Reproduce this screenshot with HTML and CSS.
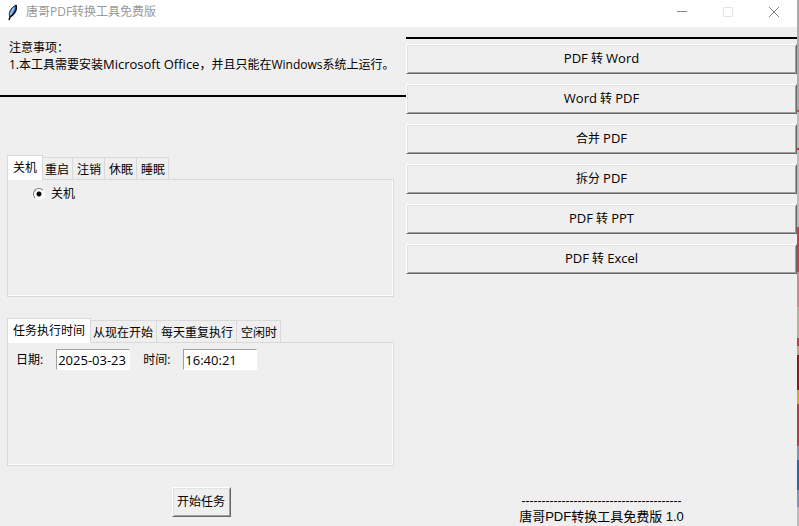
FILE: index.html
```html
<!DOCTYPE html>
<html lang="zh-CN">
<head>
<meta charset="utf-8">
<title>唐哥PDF转换工具免费版</title>
<link rel="stylesheet" href="styles.css">
</head>
<body>
<div class="window">
  <header class="titlebar">
    <svg class="feather" width="16" height="18" viewBox="0 0 16 18" aria-hidden="true">
      <path d="M5 14C3 11 5 5 11 2c1.500 4-1 9-6 12z" fill="#3f7fd0" stroke="#333" stroke-width="1"/>
      <path d="M9 5C7.500 7 6.500 9 5.500 12" fill="none" stroke="#9cc8f4" stroke-width="1.600"/>
      <path d="M11 2c1.500 4-1 9-6 12l-1 3" fill="none" stroke="#111" stroke-width="1.500"/>
    </svg>
    <h1 class="title">唐哥PDF转换工具免费版</h1>
    <div class="controls">
      <button class="control" type="button" aria-label="最小化"><svg width="10" height="10" viewBox="0 0 10 10"><path d="M0 4.5h10" stroke="#888"/></svg></button>
      <button class="control" type="button" aria-label="最大化" disabled><svg width="10" height="10" viewBox="0 0 10 10"><path d="M.5.5h9v9h-9z" fill="none" stroke="#e5e5e5"/></svg></button>
      <button class="control" type="button" aria-label="关闭"><svg width="10" height="10" viewBox="0 0 10 10"><path d="M0 0l10 10M10 0L0 10" stroke="#888"/></svg></button>
    </div>
  </header>
  <main class="content">
    <section class="left">
      <div class="notice">
        <p>注意事项：</p>
        <p>1.本工具需要安装<span class="latin">Microsoft Office</span>，并且只能在Windows系统上运行。</p>
      </div>
      <div class="notebook action-book">
        <div class="tabs" role="tablist">
          <button class="tab active" type="button" role="tab" aria-selected="true">关机</button>
          <button class="tab" type="button" role="tab">重启</button>
          <button class="tab" type="button" role="tab">注销</button>
          <button class="tab" type="button" role="tab">休眠</button>
          <button class="tab" type="button" role="tab">睡眠</button>
        </div>
        <div class="pane action-pane" role="tabpanel">
          <label class="choice"><input class="radio" type="radio" name="action" checked>关机</label>
        </div>
      </div>
      <div class="notebook">
        <div class="tabs" role="tablist">
          <button class="tab active" type="button" role="tab" aria-selected="true">任务执行时间</button>
          <button class="tab" type="button" role="tab">从现在开始</button>
          <button class="tab" type="button" role="tab">每天重复执行</button>
          <button class="tab" type="button" role="tab">空闲时</button>
        </div>
        <div class="pane time-pane" role="tabpanel">
          <label class="field">日期: <input class="entry" type="text" value="2025-03-23"></label>
          <label class="field">时间: <input class="entry" type="text" value="16:40:21"></label>
        </div>
      </div>
      <button class="raised start" type="button">开始任务</button>
    </section>
    <section class="right">
      <div class="tools">
        <button class="raised" type="button"><span class="latin">PDF</span> 转 <span class="latin">Word</span></button>
        <button class="raised" type="button"><span class="latin">Word</span> 转 <span class="latin">PDF</span></button>
        <button class="raised" type="button">合并 <span class="latin">PDF</span></button>
        <button class="raised" type="button">拆分 <span class="latin">PDF</span></button>
        <button class="raised" type="button"><span class="latin">PDF</span> 转 <span class="latin">PPT</span></button>
        <button class="raised" type="button"><span class="latin">PDF</span> 转 <span class="latin">Excel</span></button>
      </div>
      <footer class="version">
        <p class="dashes">----------------------------------------</p>
        <p>唐哥PDF转换工具免费版 1.0</p>
      </footer>
    </section>
  </main>
</div>
<div class="backdrop"></div>
</body>
</html>
```
FILE: styles.css
```css
* { box-sizing: border-box; }

body {
  margin: 0;
  display: flex;
  min-height: 100vh;
  background: #efefef;
  color: #000;
  font: 12px/17px "Open Sans", "Noto Sans CJK SC", sans-serif;
}

p, h1 { margin: 0; }
button, input { font: inherit; color: inherit; border-radius: 0; }
.latin { font-size: 13px; }

.window { flex: 1; display: flex; flex-direction: column; min-width: 0; }

.titlebar {
  display: flex;
  align-items: center;
  height: 27px;
  padding: 0 0 4px 5px;
  background: #fff;
}
.title { margin-left: 5px; font-size: 12px; font-weight: 400; color: #999; }
.controls { display: flex; margin-left: auto; }
.control {
  display: flex;
  align-items: center;
  justify-content: center;
  width: 46px;
  height: 22px;
  padding: 0;
  border: 0;
  background: none;
}

.content { flex: 1; display: grid; grid-template-columns: 406fr 391fr; }

.left { display: flex; flex-direction: column; }
.notice {
  padding: 12px 0 22px 9px;
  border-bottom: 2px solid #000;
}

.notebook { margin: 0 12px 21px 7px; }
.action-book { margin-top: 58px; }
.tabs { display: flex; align-items: flex-end; }
.tab {
  height: 22px;
  padding: 2px 3px 0 4px;
  border: 1px solid #d9d9d9;
  border-width: 1px 1px 0 0;
  background: #efefef;
}
.tab:nth-child(2) { padding-left: 2px; }
.tab.active {
  height: 25px;
  margin-bottom: -1px;
  padding: 0 5px 2px;
  border-left-width: 1px;
  background: #fff;
  z-index: 1;
}
.pane { border: 1px solid #d9d9d9; box-shadow: inset -1px -1px #fff; }
.action-pane { height: 118px; padding: 5px 25px; }
.time-pane { display: flex; align-items: flex-start; gap: 13px; height: 124px; padding: 6px 8px; }

.choice { display: inline-flex; align-items: center; gap: 6px; }
.radio {
  appearance: none;
  width: 12px;
  height: 12px;
  margin: 0;
  border: 1px solid;
  border-color: #777 #fff #fff #777;
  border-radius: 50%;
  background: radial-gradient(circle, #000 2px, #fff 3px);
}
.field { display: flex; align-items: center; gap: 13px; }
.entry {
  width: 74px;
  height: 21px;
  padding: 0 1px;
  border: 1px solid;
  border-color: #a0a0a0 #fff #fff #a0a0a0;
  background: #fff;
  font-size: 13px;
}

.raised {
  height: 30px;
  padding: 0 4px 2px;
  border: 1px solid;
  border-color: #fff #696969 #696969 #fff;
  background: #efefef;
  box-shadow: inset 1px 1px #e3e3e3, inset -1px -1px #a0a0a0;
}
.start { align-self: center; margin-left: -4px; width: 59px; }

.right { display: flex; flex-direction: column; padding-top: 10px; }
.tools { display: grid; gap: 10px; padding-top: 5px; border-top: 2px solid #000; }
.version {
  margin-top: auto;
  padding-bottom: 1px;
  text-align: center;
  font: 13px/17px "Liberation Sans", "Noto Sans CJK SC", sans-serif;
}
.dashes { font-size: 12px; line-height: 13px; }

.backdrop {
  width: 2px;
  background: linear-gradient(#aaa 0 110px, #c44 110px 112px, #bbb 112px 148px, #c33 148px 150px, #bbb 150px 227px, #c0424e 227px 272px, #c48c94 272px 307px, #b9b0a4 307px 338px, #b8414b 338px 346px, #b9a48c 346px 355px, #8c1820 355px 390px, #d4a92c 390px 404px, #b0404c 404px 446px, #8195b5 446px 460px, #3a6299 460px 490px, #8294b4 490px 507px, #bbb 507px);
}
```
